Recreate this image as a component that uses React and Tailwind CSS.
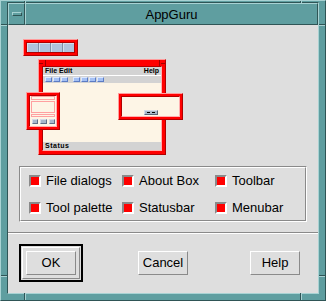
import React from 'react'

const cells = [0, 1, 2, 3]

function RedBox({ className = '', children }) {
  return (
    <div className={`border border-t-[#ff9c9c] border-l-[#ff9c9c] border-r-[#b00000] border-b-[#b00000] bg-[#ff0000] p-[2px] ${className}`}>
      <div className="h-full w-full border border-t-[#b00000] border-l-[#b00000] border-r-[#ffb0b0] border-b-[#ffb0b0] bg-[#fdf5e6]">
        {children}
      </div>
    </div>
  )
}

function MiniBtn() {
  return <div className="w-[7px] h-[5px] bg-[#a4c0f4] border-t border-l border-t-[#dce8ff] border-l-[#dce8ff] border-r border-b border-r-[#5c7cc4] border-b-[#5c7cc4]" />
}

function PaletteBtn() {
  return <div className="w-[7px] h-[5px] bg-[#a8b8cc] border-t border-l border-t-[#d4dce8] border-l-[#d4dce8] border-r border-b border-r-[#607088] border-b-[#607088]" />
}

function Preview() {
  return (
    <div className="relative h-[141px] pt-[14px]">
      {/* toolbar */}
      <div className="ml-[15px] w-[55px] h-[17px] border border-t-[#ff9c9c] border-l-[#ff9c9c] border-r-[#b00000] border-b-[#b00000] bg-[#ff0000] p-[2px]">
        <div className="flex h-full gap-[1px] border border-[#b00000] bg-[#8090a8]">
          {cells.map(i => (
            <div key={i} className="w-[11px] h-full bg-[#b0c4de] border-t border-l border-t-[#d4e0ee] border-l-[#d4e0ee]" />
          ))}
        </div>
      </div>

      {/* main window */}
      <div className="relative ml-[30px] mt-[3px] w-[128px] h-[96px] border border-t-[#ff9c9c] border-l-[#ff9c9c] border-r-[#b00000] border-b-[#b00000] bg-[#ff0000] pt-[6px] px-[3px] pb-[3px]">
        <div className="absolute left-[6px] top-0 w-[1px] h-[6px] bg-[#a00000]" />
        <div className="absolute right-[5px] top-0 w-[1px] h-[6px] bg-[#a00000]" />
        <div className="absolute left-0 top-[3px] w-[4px] h-[1px] bg-[#a00000]" />
        <div className="absolute right-0 top-[3px] w-[4px] h-[1px] bg-[#a00000]" />
        <div className="flex flex-col h-full border border-t-[#b00000] border-l-[#b00000] border-r-[#ffb0b0] border-b-[#ffb0b0] bg-[#fdf5e6] font-['Liberation_Sans',sans-serif] font-bold text-[7px] leading-[8px] text-black">
          <div className="h-[8px] bg-[#d3d3d3] flex justify-between px-[2px]">
            <span>File Edit</span>
            <span>Help</span>
          </div>
          <div className="h-[8px] bg-[#d3d3d3] border-t border-t-white flex items-center px-[2px]">
            <div className="flex gap-[1px]"><MiniBtn /><MiniBtn /><MiniBtn /></div>
            <div className="flex gap-[1px] ml-[5px]"><MiniBtn /><MiniBtn /><MiniBtn /><MiniBtn /></div>
          </div>
          <div className="flex-1" />
          <div className="h-[8px] bg-[#d3d3d3] px-[2px] tracking-[0.5px]">Status</div>
        </div>
      </div>

      {/* tool palette */}
      <RedBox className="absolute left-[18px] top-[67px] w-[34px] h-[38px]">
        <div className="px-[1px]">
          <div className="h-[4px] border border-[#ffa0a0]" />
          <div className="mt-[1px] h-[12px] border border-[#ffa0a0]" />
          <div className="mt-[1px] h-[3px] border border-[#ffa0a0]" />
          <div className="mt-[2px] flex gap-[2px] pl-[1px]"><PaletteBtn /><PaletteBtn /><PaletteBtn /></div>
        </div>
      </RedBox>

      {/* about box */}
      <RedBox className="absolute left-[110px] top-[68px] w-[65px] h-[27px]">
        <div className="flex justify-center pt-[13px]">
          <div className="w-[14px] h-[5px] bg-[#a8b8cc] border-t border-l border-t-[#d4dce8] border-l-[#d4dce8] border-r border-b border-r-[#586478] border-b-[#586478] flex items-center justify-center gap-[2px]">
            <span className="w-[3px] h-[1px] bg-black" />
            <span className="w-[3px] h-[1px] bg-black" />
          </div>
        </div>
      </RedBox>
    </div>
  )
}

function Check({ label }) {
  return (
    <div className="flex items-center">
      <div className="w-[12px] h-[12px] border-2 border-t-[#8a8a8a] border-l-[#8a8a8a] border-r-white border-b-white bg-[#ff0000]" />
      <span className="ml-[5px]">{label}</span>
    </div>
  )
}

function Btn({ children }) {
  return (
    <div className="w-[50px] h-[24px] flex items-center justify-center border border-t-white border-l-white border-r-[#8a8a8a] border-b-[#8a8a8a]">
      {children}
    </div>
  )
}

function Notch({ className }) {
  return <div className={`absolute ${className}`} />
}

export default function App() {
  return (
    <div className="relative w-[326px] h-[301px] bg-[#5f9ea0] border border-t-[#a8d2d3] border-l-[#a8d2d3] border-r-[#2f5556] border-b-[#2f5556] pt-[1px] px-[6px] pb-[6px] font-['Liberation_Sans',Arial,sans-serif] text-black">
      {/* resize corner notches */}
      <Notch className="left-[23px] top-0 w-[1px] h-[2px] bg-[#2f5556]" />
      <Notch className="left-[24px] top-0 w-[1px] h-[2px] bg-[#a8d2d3]" />
      <Notch className="left-[299px] top-0 w-[1px] h-[2px] bg-[#2f5556]" />
      <Notch className="left-[300px] top-0 w-[1px] h-[2px] bg-[#a8d2d3]" />
      <Notch className="left-[23px] bottom-0 w-[1px] h-[7px] bg-[#2f5556]" />
      <Notch className="left-[24px] bottom-0 w-[1px] h-[7px] bg-[#a8d2d3]" />
      <Notch className="left-[299px] bottom-0 w-[1px] h-[7px] bg-[#2f5556]" />
      <Notch className="left-[300px] bottom-0 w-[1px] h-[7px] bg-[#a8d2d3]" />
      <Notch className="left-0 top-[23px] w-[6px] h-[1px] bg-[#2f5556]" />
      <Notch className="left-0 top-[24px] w-[6px] h-[1px] bg-[#a8d2d3]" />
      <Notch className="right-0 top-[23px] w-[6px] h-[1px] bg-[#2f5556]" />
      <Notch className="right-0 top-[24px] w-[6px] h-[1px] bg-[#a8d2d3]" />
      <Notch className="left-0 top-[274px] w-[6px] h-[1px] bg-[#2f5556]" />
      <Notch className="left-0 top-[275px] w-[6px] h-[1px] bg-[#a8d2d3]" />
      <Notch className="right-0 top-[274px] w-[6px] h-[1px] bg-[#2f5556]" />
      <Notch className="right-0 top-[275px] w-[6px] h-[1px] bg-[#a8d2d3]" />

      <div className="flex flex-col h-full border border-t-[#2f5556] border-l-[#2f5556] border-r-[#a8d2d3] border-b-[#a8d2d3]">
        {/* title bar */}
        <div className="flex h-[22px]">
          <div className="w-[17px] flex items-center justify-center border border-t-[#a8d2d3] border-l-[#a8d2d3] border-r-[#2f5556] border-b-[#2f5556]">
            <div className="w-[10px] h-[4px] border border-t-[#a8d2d3] border-l-[#a8d2d3] border-r-[#2f5556] border-b-[#2f5556]" />
          </div>
          <div className="flex-1 flex items-center justify-center border border-t-[#a8d2d3] border-l-[#a8d2d3] border-r-[#2f5556] border-b-[#2f5556] text-[13px] leading-none">
            AppGuru
          </div>
        </div>

        {/* dialog body */}
        <div className="flex-1 bg-[#dedede] text-[13px]">
          <Preview />

          <div className="ml-[11px] w-[288px] h-[56px] border border-t-[#8a8a8a] border-l-[#8a8a8a] border-r-white border-b-white">
            <div className="h-full border border-t-white border-l-white border-r-[#8a8a8a] border-b-[#8a8a8a] pl-[8px] grid grid-cols-[93px_93px_93px] grid-rows-[25px_25px] gap-y-[2px]">
              <Check label="File dialogs" />
              <Check label="About Box" />
              <Check label="Toolbar" />
              <Check label="Tool palette" />
              <Check label="Statusbar" />
              <Check label="Menubar" />
            </div>
          </div>

          <div className="mt-[10px] h-[2px] border-t border-t-[#8a8a8a] border-b border-b-white" />

          <div className="flex items-center mt-[10px] pl-[11px]">
            <div className="w-[64px] h-[38px] border-2 border-black p-[1px]">
              <div className="h-full border border-t-white border-l-white border-r-[#8a8a8a] border-b-[#8a8a8a] p-[3px]">
                <Btn>OK</Btn>
              </div>
            </div>
            <div className="ml-[55px]"><Btn>Cancel</Btn></div>
            <div className="ml-[62px]"><Btn>Help</Btn></div>
          </div>
        </div>
      </div>
    </div>
  )
}
